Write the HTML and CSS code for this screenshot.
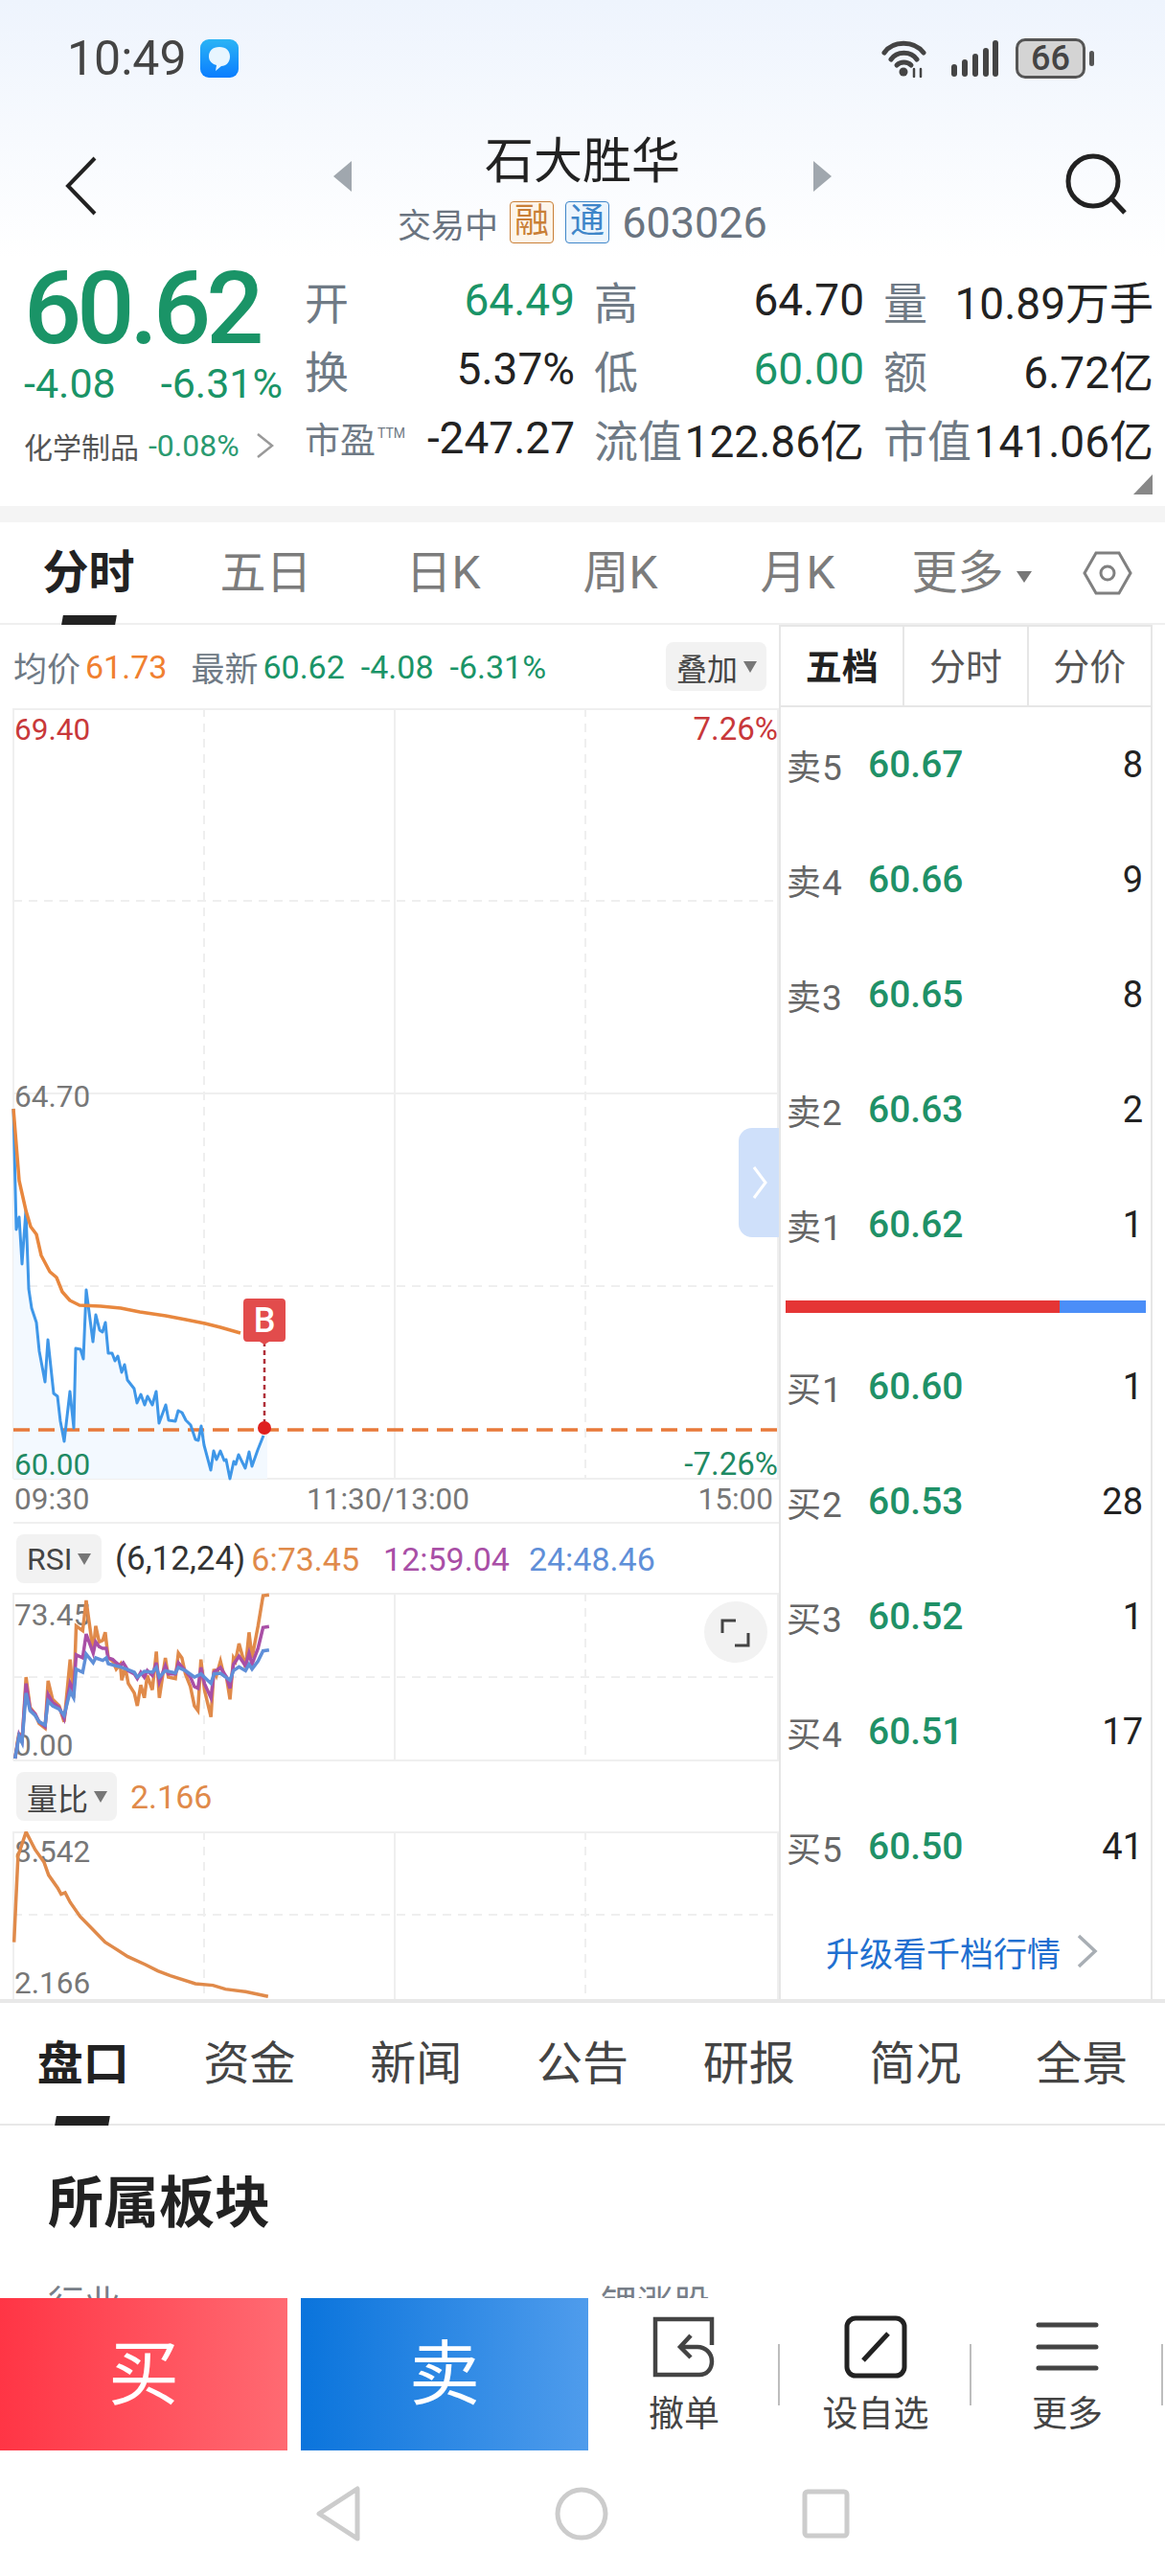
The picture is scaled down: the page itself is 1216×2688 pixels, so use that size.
FILE: index.html
```html
<!DOCTYPE html>
<html lang="zh-CN">
<head>
  <meta charset="UTF-8">
  <meta name="viewport" content="width=device-width, initial-scale=1.0">
  <title>石大胜华 603026</title>
  <link rel="stylesheet" href="styles.css">
</head>
<body>
<div class="page">

  <!-- status bar -->
  <div class="status">
    <div class="status-left">
      <span class="clock">10:49</span>
      <svg class="msg-icon" width="40" height="40" viewBox="0 0 40 40">
        <defs><linearGradient id="msgBg" x1="0" y1="0" x2="0" y2="1"><stop offset="0" stop-color="#2bb4f5"/><stop offset="1" stop-color="#0a7dff"/></linearGradient></defs>
        <rect width="40" height="40" rx="9" fill="url(#msgBg)"/>
        <path d="M20 8c7 0 11 4 11 10s-4 10-9 10l-6 5 1-6c-4-1-8-4-8-9 0-6 4-10 11-10z" fill="#e8f6ff"/>
      </svg>
    </div>
    <div class="status-right">
      <svg width="48" height="40" viewBox="0 0 48 40" fill="none" stroke="#444" stroke-width="5" stroke-linecap="round">
        <path d="M3 14C12 1 34 1 44 14"/>
        <path d="M10 21C16 12 31 12 37 21"/>
        <path d="M16 27C20 23 27 23 31 27"/>
        <circle cx="23" cy="34" r="4.5" fill="#444" stroke="none"/>
        <path d="M34 31v8M41 31v8" stroke-width="2.5"/>
      </svg>
      <svg class="signal" width="50" height="40" viewBox="0 0 50 40" fill="#444">
        <rect x="0" y="26" width="6" height="13" rx="3"/>
        <rect x="11" y="21" width="6" height="18" rx="3"/>
        <rect x="22" y="15" width="6" height="24" rx="3"/>
        <rect x="33" y="9" width="6" height="30" rx="3"/>
        <rect x="43" y="1" width="6" height="38" rx="3"/>
      </svg>
      <div class="battery"><span class="battery-level">66</span></div>
      <span class="battery-tip"></span>
    </div>
  </div>

  <!-- stock title -->
  <div class="titlebar">
    <svg class="back" width="34" height="62" viewBox="0 0 34 62" fill="none" stroke="#222" stroke-width="4">
      <path d="M31 2L3 31l28 29"/>
    </svg>
    <div class="title-group">
      <span class="arrow-left"></span>
      <div class="title-text">
        <div class="name">石大胜华</div>
        <div class="sub">
          <span>交易中</span>
          <span class="tag tag-rong">融</span>
          <span class="tag tag-tong">通</span>
          <span class="code">603026</span>
        </div>
      </div>
      <span class="arrow-right"></span>
    </div>
    <svg class="search" width="68" height="64" viewBox="0 0 68 64" fill="none" stroke="#222" stroke-width="5">
      <circle cx="31" cy="29" r="26"/>
      <path d="M50 47l14 15" stroke-width="5"/>
    </svg>
  </div>

  <!-- quote -->
  <div class="quote">
    <div class="quote-main">
      <div class="price">60.62</div>
      <div class="change"><span>-4.08</span><span>-6.31%</span></div>
      <div class="sector">
        <span>化学制品</span>
        <span class="sector-pct">-0.08%</span>
        <svg width="20" height="28" viewBox="0 0 20 28" fill="none" stroke="#999" stroke-width="2.5"><path d="M2 2l15 12L2 26"/></svg>
      </div>
    </div>
    <div class="quote-grid">
      <div class="cell"><span class="lbl">开</span><span class="green">64.49</span></div>
      <div class="cell"><span class="lbl">高</span><span>64.70</span></div>
      <div class="cell"><span class="lbl">量</span><span>10.89万手</span></div>
      <div class="cell"><span class="lbl">换</span><span>5.37%</span></div>
      <div class="cell"><span class="lbl">低</span><span class="green">60.00</span></div>
      <div class="cell"><span class="lbl">额</span><span>6.72亿</span></div>
      <div class="cell"><span class="lbl lbl-small">市盈<sup>TTM</sup></span><span>-247.27</span></div>
      <div class="cell"><span class="lbl">流值</span><span>122.86亿</span></div>
      <div class="cell"><span class="lbl">市值</span><span>141.06亿</span></div>
    </div>
    <span class="corner"></span>
  </div>
  <div class="band"></div>

  <!-- period tabs -->
  <div class="period-tabs">
    <div class="period active">分时</div>
    <div class="period">五日</div>
    <div class="period">日K</div>
    <div class="period">周K</div>
    <div class="period">月K</div>
    <div class="period period-more">更多<span class="caret-big"></span></div>
    <svg class="hex" width="52" height="46" viewBox="0 0 52 46" fill="none" stroke="#808080" stroke-width="3">
      <path d="M14 2h24l12 21-12 21H14L2 23z"/>
      <circle cx="26" cy="23" r="7"/>
    </svg>
  </div>

  <div class="market">
    <div class="charts">
      <div class="legend">
        <span class="lbl-grey">均价</span><span class="orange">61.73</span>
        <span class="lbl-grey gap-l">最新</span><span class="green">60.62</span>
        <span class="green gap-m">-4.08</span>
        <span class="green gap-m">-6.31%</span>
        <div class="pick pick-overlay">叠加<span class="caret"></span></div>
      </div>

      <!-- intraday -->
      <svg class="chart chart-main" width="813" height="852" viewBox="0 739 813 852">
        <g class="grid-solid">
          <path d="M14 740H813M14 1141H813M14 1543H813M14 1589H813"/>
          <path d="M14 739V1543M412 739V1543M812 739V1543"/>
        </g>
        <g class="grid-dash">
          <path d="M14 940H813M14 1342H813"/>
          <path d="M213 739V1543M611 739V1543"/>
        </g>
        <path fill="#f3f9ff" d="M14 1157L17 1283 20 1270 23 1319 27 1263 30 1345 33 1365 38 1380 41 1410 47 1442 50 1398 56 1454 60 1457 63 1483 67 1504 73 1452 77 1490 79 1407 84 1408 87 1418 90 1346 97 1400 100 1372 104 1388 107 1390 110 1380 113 1412 117 1412 120 1420 123 1415 127 1432 130 1424 133 1440 140 1449 143 1464 147 1455 151 1466 154 1457 159 1466 163 1452 166 1485 173 1466 176 1482 183 1483 186 1472 190 1474 194 1482 199 1487 204 1502 207 1503 210 1488 213 1508 220 1534 223 1514 226 1523 230 1514 234 1524 236 1523 240 1543 244 1525 246 1528 249 1518 256 1532 260 1515 263 1530 269 1513 275 1498 279 1490V1543H14Z"/>
        <path d="M14 1492H812" fill="none" stroke="#e8793a" stroke-width="3.5" stroke-dasharray="17 9"/>
        <polyline class="line line-blue" points="14,1157 17,1283 20,1270 23,1319 27,1263 30,1345 33,1365 38,1380 41,1410 47,1442 50,1398 56,1454 60,1457 63,1483 67,1504 73,1452 77,1490 79,1407 84,1408 87,1418 90,1346 97,1400 100,1372 104,1388 107,1390 110,1380 113,1412 117,1412 120,1420 123,1415 127,1432 130,1424 133,1440 140,1449 143,1464 147,1455 151,1466 154,1457 159,1466 163,1452 166,1485 173,1466 176,1482 183,1483 186,1472 190,1474 194,1482 199,1487 204,1502 207,1503 210,1488 213,1508 220,1534 223,1514 226,1523 230,1514 234,1524 236,1523 240,1543 244,1525 246,1528 249,1518 256,1532 260,1515 263,1530 269,1513 275,1498"/>
        <polyline class="line line-orange" points="14,1157 20,1232 27,1263 32,1280 38,1288 43,1310 52,1327 59,1333 65,1348 73,1357 83,1362 105,1363 126,1365 146,1369 173,1373 194,1377 214,1381 230,1385 251,1391"/>
        <path d="M276 1400V1488" stroke="#b0303a" stroke-width="2.5" stroke-dasharray="5 4"/>
        <circle cx="276" cy="1490" r="7" fill="#df1f1f"/>
        <path d="M258 1355h36a4 4 0 0 1 4 4v37a4 4 0 0 1-4 4h-13l-5 3-5-3h-13a4 4 0 0 1-4-4v-37a4 4 0 0 1 4-4z" fill="#e24c4c"/>
        <text class="mark" x="276" y="1390">B</text>
        <path d="M813 1177h-28a14 14 0 0 0-14 14v86a14 14 0 0 0 14 14h28z" fill="#cfe0fa"/>
        <path d="M787 1218l12 16-12 16" fill="none" stroke="#fff" stroke-width="3"/>
        <text class="axis red" x="15" y="772">69.40</text>
        <text class="axis red end pct" x="812" y="772">7.26%</text>
        <text class="axis" x="15" y="1155">64.70</text>
        <text class="axis dgreen" x="15" y="1539">60.00</text>
        <text class="axis dgreen end pct" x="812" y="1539">-7.26%</text>
        <text class="axis" x="15" y="1575">09:30</text>
        <text class="axis mid" x="405" y="1575">11:30/13:00</text>
        <text class="axis end" x="807" y="1575">15:00</text>
      </svg>

      <!-- RSI -->
      <div class="sub-head">
        <div class="pick pick-rsi">RSI<span class="caret"></span></div>
        <span class="rsi-args">(6,12,24)</span>
        <span class="ind-a">6:73.45</span>
        <span class="ind-b">12:59.04</span>
        <span class="ind-c">24:48.46</span>
      </div>
      <svg class="chart" width="813" height="176" viewBox="0 1662 813 176">
        <g class="grid-solid">
          <path d="M14 1663H813M14 1837H813"/>
          <path d="M14 1662V1837M412 1662V1837M812 1662V1837"/>
        </g>
        <g class="grid-dash">
          <path d="M14 1750H813"/>
          <path d="M213 1662V1837M611 1662V1837"/>
        </g>
        <text class="axis" x="15" y="1696">73.45</text>
        <text class="axis" x="15" y="1832">0.00</text>
        <g transform="matrix(.523 0 0 .3333 0 1580)">
          <polyline class="ind" stroke="#e08a4a" points="30,765 38,685 44,715 52,510 60,605 70,625 78,655 90,670 96,522 105,580 118,600 128,650 140,455 147,575 152,350 165,365 172,270 186,430 191,350 198,400 205,395 210,370 216,450 225,460 232,485 240,470 243,520 250,480 256,530 268,560 274,600 281,535 288,575 294,505 304,550 312,430 318,575 330,450 336,510 350,515 356,435 363,450 370,500 380,540 388,600 395,615 401,455 408,550 421,635 427,485 432,505 440,460 447,505 452,510 459,580 466,450 470,460 477,405 490,480 497,370 503,450 515,350 525,255 537,253"/>
          <polyline class="ind" stroke="#a94fa6" points="30,765 38,690 44,710 52,530 60,610 70,625 78,650 90,665 96,565 105,590 118,605 128,640 140,530 147,555 152,440 165,450 172,375 186,435 191,400 198,415 205,420 212,420 216,450 225,455 232,465 240,475 246,465 256,490 268,500 274,515 281,495 288,510 294,490 304,505 312,465 318,525 330,475 336,500 350,500 356,465 370,490 380,510 388,540 395,545 401,480 408,530 421,575 427,495 440,480 452,510 459,545 466,470 477,445 490,475 497,435 503,470 515,420 525,355 537,352"/>
          <polyline class="ind" stroke="#5f8fd8" points="30,765 38,695 44,715 52,560 60,615 70,630 78,650 90,660 96,585 105,600 118,610 128,630 140,555 147,575 152,485 165,495 172,438 186,465 191,450 205,458 212,450 216,468 232,475 240,478 256,487 268,495 274,510 288,492 304,495 312,480 318,510 330,490 350,497 356,480 370,490 388,510 395,505 401,500 421,530 427,500 440,498 459,520 466,490 477,478 490,490 497,470 503,485 515,460 525,428 537,425"/>
        </g>
        <ellipse cx="768" cy="1703" rx="33" ry="32" fill="#f2f2f2"/>
        <path d="M768 1691H754V1704M767 1717H781V1704" fill="none" stroke="#444" stroke-width="3"/>
      </svg>

      <!-- volume ratio -->
      <div class="sub-head sub-head-vol">
        <div class="pick pick-vol">量比<span class="caret"></span></div>
        <span class="ind-a ratio">2.166</span>
      </div>
      <svg class="chart" width="813" height="175" viewBox="0 1911 813 175">
        <g class="grid-solid">
          <path d="M14 1912H813"/>
          <path d="M14 1911V2086M412 1911V2086M812 1911V2086"/>
        </g>
        <g class="grid-dash">
          <path d="M14 1998H813"/>
          <path d="M213 1911V2086M611 1911V2086"/>
        </g>
        <text class="axis" x="15" y="1943">8.542</text>
        <text class="axis" x="15" y="2080">2.166</text>
        <g transform="matrix(.523 0 0 .3333 0 1580)">
          <polyline class="ind" stroke="#e08a4a" points="28,1340 36,1070 52,995 70,1050 88,1090 97,1130 115,1170 122,1190 130,1185 140,1215 160,1260 185,1300 210,1340 225,1355 255,1385 290,1410 315,1430 340,1445 390,1470 425,1475 450,1487 490,1495 535,1510"/>
        </g>
      </svg>
    </div>

    <!-- order book -->
    <div class="book">
      <div class="book-tabs">
        <div class="book-tab active">五档</div>
        <div class="book-tab">分时</div>
        <div class="book-tab">分价</div>
      </div>
      <div class="row"><span class="row-lbl">卖<i>5</i></span><span class="row-price">60.67</span><span class="row-qty">8</span></div>
      <div class="row"><span class="row-lbl">卖<i>4</i></span><span class="row-price">60.66</span><span class="row-qty">9</span></div>
      <div class="row"><span class="row-lbl">卖<i>3</i></span><span class="row-price">60.65</span><span class="row-qty">8</span></div>
      <div class="row"><span class="row-lbl">卖<i>2</i></span><span class="row-price">60.63</span><span class="row-qty">2</span></div>
      <div class="row"><span class="row-lbl">卖<i>1</i></span><span class="row-price">60.62</span><span class="row-qty">1</span></div>
      <div class="ratio-bar"><span class="ratio-buy"></span><span class="ratio-sell"></span></div>
      <div class="row"><span class="row-lbl">买<i>1</i></span><span class="row-price">60.60</span><span class="row-qty">1</span></div>
      <div class="row"><span class="row-lbl">买<i>2</i></span><span class="row-price">60.53</span><span class="row-qty">28</span></div>
      <div class="row"><span class="row-lbl">买<i>3</i></span><span class="row-price">60.52</span><span class="row-qty">1</span></div>
      <div class="row"><span class="row-lbl">买<i>4</i></span><span class="row-price">60.51</span><span class="row-qty">17</span></div>
      <div class="row"><span class="row-lbl">买<i>5</i></span><span class="row-price">60.50</span><span class="row-qty">41</span></div>
      <div class="upgrade">升级看千档行情
        <svg width="22" height="36" viewBox="0 0 22 36" fill="none" stroke="#a8aeb4" stroke-width="3.5"><path d="M2 2l17 16L2 34"/></svg>
      </div>
    </div>
  </div>

  <!-- info tabs -->
  <div class="info-tabs">
    <div class="info-tab active">盘口</div>
    <div class="info-tab">资金</div>
    <div class="info-tab">新闻</div>
    <div class="info-tab">公告</div>
    <div class="info-tab">研报</div>
    <div class="info-tab">简况</div>
    <div class="info-tab">全景</div>
  </div>

  <div class="detail">
    <h2>所属板块</h2>
    <div class="detail-row"><span>行业</span><span>锂涨股</span></div>
  </div>

  <!-- trade bar -->
  <div class="trade">
    <div class="btn btn-buy">买</div>
    <div class="btn btn-sell">卖</div>
    <div class="action">
      <svg width="66" height="64" viewBox="0 0 66 64" fill="none" stroke="#444" stroke-width="4.5">
        <path d="M62 30V3H3v58h46c8 0 13-6 13-14 0-9-7-15-15-15H30"/>
        <path d="M40 20L29 32l11 11"/>
      </svg>
      <span>撤单</span>
    </div>
    <div class="action">
      <svg width="66" height="66" viewBox="0 0 66 66" fill="none" stroke="#222" stroke-width="5">
        <rect x="3" y="3" width="60" height="60" rx="9"/>
        <path d="M20 47l26-28" stroke-width="5"/>
      </svg>
      <span>设自选</span>
    </div>
    <div class="action">
      <svg width="66" height="56" viewBox="0 0 66 56" fill="none" stroke="#444" stroke-width="5" stroke-linecap="round">
        <path d="M3 5h60M3 28h60M3 50h60"/>
      </svg>
      <span>更多</span>
    </div>
  </div>

  <!-- system nav -->
  <div class="sysnav">
    <svg width="48" height="58" viewBox="0 0 48 58" fill="none" stroke="#ccc" stroke-width="5" stroke-linejoin="round"><path d="M44 3v52L4 29z"/></svg>
    <svg width="56" height="58" viewBox="0 0 56 58" fill="none" stroke="#ccc" stroke-width="5"><circle cx="28" cy="29" r="25"/></svg>
    <svg width="50" height="52" viewBox="0 0 50 52" fill="none" stroke="#ccc" stroke-width="5"><rect x="3" y="3" width="44" height="46" rx="3"/></svg>
  </div>
</div>
</body>
</html>
```

FILE: styles.css
```css
* {
  box-sizing: border-box;
}

body {
  margin: 0;
  background: #fff;
  color: #222;
  font-family: Roboto, "Noto Sans CJK SC", sans-serif;
}

.page {
  width: 1216px;
  height: 2688px;
  overflow: hidden;
  display: flex;
  flex-direction: column;
  background: linear-gradient(#eef4fd 0, #fff 270px);
}

.green { color: #1a9467; }
.orange { color: #f08030; }

/* status bar */
.status {
  height: 122px;
  flex: none;
  display: flex;
  align-items: center;
  justify-content: space-between;
  padding: 0 74px 0 70px;
}

.status-left,
.status-right {
  display: flex;
  align-items: center;
}

.clock {
  font-size: 50px;
  color: #444;
  margin-right: 14px;
}

.signal {
  margin-left: 25px;
  margin-right: 17px;
}

.battery {
  width: 73px;
  height: 42px;
  border: 3px solid #555;
  border-radius: 10px;
  background: #d4d4d4;
  text-align: center;
}

.battery-level {
  font-size: 36px;
  font-weight: 500;
  line-height: 36px;
  color: #444;
}

.battery-tip {
  width: 5px;
  height: 16px;
  margin-left: 4px;
  border-radius: 3px;
  background: #555;
}

/* title */
.titlebar {
  height: 146px;
  flex: none;
  display: flex;
  align-items: flex-start;
  padding: 15px 38px 0 68px;
}

.back {
  margin-top: 26px;
}

.title-group {
  display: flex;
  align-items: flex-start;
  margin-left: 246px;
}

.title-text {
  width: 482px;
  text-align: center;
}

.name {
  font-size: 51px;
  line-height: 64px;
  color: #222;
}

.sub {
  display: flex;
  align-items: center;
  justify-content: center;
  height: 62px;
  font-size: 35px;
  color: #6a7480;
}

.code {
  font-size: 45px;
  margin-left: 13px;
}

.tag {
  width: 46px;
  height: 44px;
  line-height: 40px;
  text-align: center;
  font-size: 36px;
  border: 1px solid;
  border-radius: 4px;
  margin-left: 12px;
}

.tag-rong {
  color: #c97f37;
  background: #fdf5ea;
}

.tag-tong {
  color: #3f86c9;
  background: #ecf5fd;
}

.arrow-left,
.arrow-right {
  width: 0;
  height: 0;
  margin-top: 31px;
  border-top: 16px solid transparent;
  border-bottom: 16px solid transparent;
}

.arrow-left { border-right: 19px solid #a0a7ae; }
.arrow-right { border-left: 19px solid #a0a7ae; }

.search {
  margin-left: auto;
  margin-top: 23px;
}

/* quote */
.quote {
  position: relative;
  height: 260px;
  flex: none;
  display: flex;
}

.quote-main {
  width: 318px;
  flex: none;
  padding: 3px 0 0 25px;
}

.price {
  font-size: 106px;
  font-weight: 500;
  line-height: 102px;
  letter-spacing: -5px;
  color: #1a9467;
}

.change {
  display: flex;
  justify-content: space-between;
  width: 270px;
  margin-top: 2px;
  font-size: 43px;
  line-height: 50px;
  color: #1a9467;
}

.sector {
  display: flex;
  align-items: center;
  height: 48px;
  margin-top: 16px;
  font-size: 30px;
  color: #555;
}

.sector-pct {
  margin-left: 10px;
  margin-right: 17px;
  font-size: 32px;
  color: #2a9a70;
}

.quote-grid {
  flex: 1;
  display: grid;
  grid-template-columns: 282px 282px 282px;
  grid-auto-rows: 72px;
  column-gap: 20px;
  padding-top: 9px;
  font-size: 46px;
  white-space: nowrap;
}

.cell {
  display: flex;
  align-items: center;
  justify-content: space-between;
}

.lbl {
  color: #6f7a85;
}

.lbl-small {
  font-size: 37px;
}

.lbl sup {
  font-size: 14px;
  vertical-align: 16px;
  line-height: 0;
  margin-left: 2px;
}

.corner {
  position: absolute;
  right: 13px;
  bottom: 12px;
  width: 0;
  height: 0;
  border-left: 20px solid transparent;
  border-bottom: 21px solid #888;
}

.band {
  height: 17px;
  flex: none;
  background: #f4f4f4;
}

/* period tabs */
.period-tabs {
  height: 107px;
  flex: none;
  display: flex;
  align-items: center;
  background: #fff;
  border-bottom: 2px solid #efefef;
}

.period {
  position: relative;
  width: 185px;
  height: 100%;
  line-height: 105px;
  text-align: center;
  font-size: 48px;
  color: #7c7c7c;
}

.period-more {
  padding-right: 7px;
}

.period.active {
  font-weight: 700;
  color: #222;
}

.period.active::after {
  content: "";
  position: absolute;
  left: 65px;
  bottom: -2px;
  width: 56px;
  height: 10px;
  background: #222;
  transform: skewX(-10deg);
}

.caret-big {
  display: inline-block;
  vertical-align: 6px;
  margin-left: 13px;
  border-left: 8px solid transparent;
  border-right: 8px solid transparent;
  border-top: 12px solid #777;
}

.hex {
  margin-left: 20px;
}

/* chart column */
.market {
  height: 1438px;
  flex: none;
  display: flex;
  background: #fff;
  border-bottom: 4px solid #e8e8e8;
}

.charts {
  width: 813px;
  flex: none;
}

.chart {
  display: block;
}

.legend {
  height: 87px;
  display: flex;
  align-items: center;
  padding-left: 14px;
  font-size: 34px;
  white-space: nowrap;
}

.lbl-grey {
  margin-right: 5px;
  font-size: 35px;
  color: #6f7a85;
}

.gap-l { margin-left: 25px; }
.gap-m { margin-left: 17px; }

.pick {
  display: flex;
  align-items: center;
  height: 51px;
  padding-left: 11px;
  border-radius: 8px;
  background: #f2f2f2;
  font-size: 32px;
  color: #444;
}

.pick-overlay {
  width: 105px;
  margin-left: auto;
  margin-right: 13px;
}

.pick-rsi {
  width: 89px;
}

.pick-vol {
  width: 105px;
}

.caret {
  margin-left: 6px;
  border-left: 7px solid transparent;
  border-right: 7px solid transparent;
  border-top: 12px solid #777;
}

.sub-head {
  height: 71px;
  display: flex;
  align-items: center;
  padding-left: 17px;
  font-size: 34px;
  white-space: nowrap;
}

.sub-head-vol {
  height: 73px;
}

.rsi-args {
  margin: 0 6px 0 14px;
  font-size: 35px;
  color: #333;
}

.ind-a { color: #e08a4a; }
.ind-b { color: #a94fa6; margin-left: 25px; }
.ind-c { color: #5f8fd8; margin-left: 20px; }

.ratio {
  margin-left: 14px;
  font-size: 34px;
}

.grid-solid path {
  fill: none;
  stroke: #efefef;
  stroke-width: 2;
}

.grid-dash path {
  fill: none;
  stroke: #efefef;
  stroke-width: 2;
  stroke-dasharray: 9 7;
}

.line {
  fill: none;
  stroke-width: 3;
  stroke-linejoin: round;
}

.line-blue { stroke: #3f97e8; }
.line-orange { stroke: #e8873e; stroke-width: 3.5; }

.ind {
  fill: none;
  stroke-width: 3.5;
  vector-effect: non-scaling-stroke;
}

.axis {
  font-family: Roboto, sans-serif;
  font-size: 31.5px;
  fill: #777;
}

.axis.red { fill: #c8383a; }
.axis.dgreen { fill: #1f8a63; }
.axis.end { text-anchor: end; }
.axis.mid { text-anchor: middle; }
.axis.pct { font-size: 33px; }

.mark {
  font-family: Roboto, sans-serif;
  font-size: 36px;
  font-weight: 500;
  fill: #fff;
  text-anchor: middle;
}

/* order book */
.book {
  width: 390px;
  flex: none;
  border-left: 2px solid #e6e6e6;
  border-right: 2px solid #e6e6e6;
}

.book-tabs {
  height: 86px;
  display: flex;
  border-top: 2px solid #e6e6e6;
  border-bottom: 2px solid #e6e6e6;
}

.book-tab {
  flex: 1;
  line-height: 84px;
  text-align: center;
  font-size: 38px;
  color: #555;
  border-left: 2px solid #e6e6e6;
}

.book-tab:first-child {
  border-left: 0;
}

.book-tab.active {
  font-weight: 700;
  color: #222;
}

.row {
  height: 120px;
  display: flex;
  align-items: center;
  padding: 0 8px 0 6px;
}

.row-lbl {
  width: 85px;
  font-size: 36px;
  color: #666;
}

.row-lbl i {
  font-style: normal;
  font-size: 37px;
  margin-left: 1px;
}

.row-price {
  font-size: 39px;
  font-weight: 500;
  color: #1f9167;
}

.row-qty {
  margin-left: auto;
  font-size: 38px;
  color: #222;
}

.ratio-bar {
  display: flex;
  height: 13px;
  margin: 19px 5px 17px 5px;
}

.ratio-buy {
  width: 286px;
  background: #e53535;
}

.ratio-sell {
  flex: 1;
  background: #4b8ef8;
}

.upgrade {
  display: flex;
  align-items: center;
  height: 98px;
  padding-left: 47px;
  font-size: 35px;
  color: #1f6fd0;
}

.upgrade svg {
  margin-left: 17px;
}

/* info tabs */
.info-tabs {
  height: 128px;
  flex: none;
  display: flex;
  background: #fff;
  border-bottom: 2px solid #e8e8e8;
}

.info-tab {
  position: relative;
  flex: 1;
  line-height: 127px;
  text-align: center;
  font-size: 48px;
  color: #444;
}

.info-tab.active {
  font-weight: 700;
  color: #222;
}

.info-tab.active::after {
  content: "";
  position: absolute;
  left: 58px;
  bottom: -2px;
  width: 56px;
  height: 10px;
  background: #222;
  transform: skewX(-10deg);
}

.detail {
  height: 180px;
  flex: none;
  overflow: hidden;
  background: #fff;
  padding: 46px 0 0 50px;
}

.detail h2 {
  margin: 0;
  font-size: 58px;
  line-height: 70px;
  font-weight: 700;
  color: #222;
}

.detail-row {
  display: flex;
  margin-top: 45px;
  font-size: 38px;
  line-height: 50px;
  color: #777e88;
}

.detail-row span {
  width: 577px;
}

/* trade bar */
.trade {
  height: 159px;
  flex: none;
  display: flex;
  background: #fff;
}

.btn {
  width: 300px;
  flex: none;
  line-height: 159px;
  text-align: center;
  font-size: 74px;
  color: #fff;
}

.btn-buy {
  background: linear-gradient(90deg, #ff3545, #ff6a72);
}

.btn-sell {
  margin-left: 14px;
  background: linear-gradient(90deg, #0a74dc, #4f9cec);
}

.action {
  position: relative;
  width: 200px;
  flex: none;
  display: flex;
  flex-direction: column;
  align-items: center;
  justify-content: flex-end;
  height: 159px;
  padding-bottom: 14px;
  gap: 7px;
  font-size: 37px;
  color: #444;
}

.action svg {
  height: 66px;
}

.action::after {
  content: "";
  position: absolute;
  right: 0;
  top: 48px;
  width: 2px;
  height: 64px;
  background: #bdbdbd;
}

/* system nav */
.sysnav {
  flex: 1;
  display: flex;
  align-items: center;
  padding: 0 0 0 329px;
  gap: 202px;
  background: #fff;
}
```
